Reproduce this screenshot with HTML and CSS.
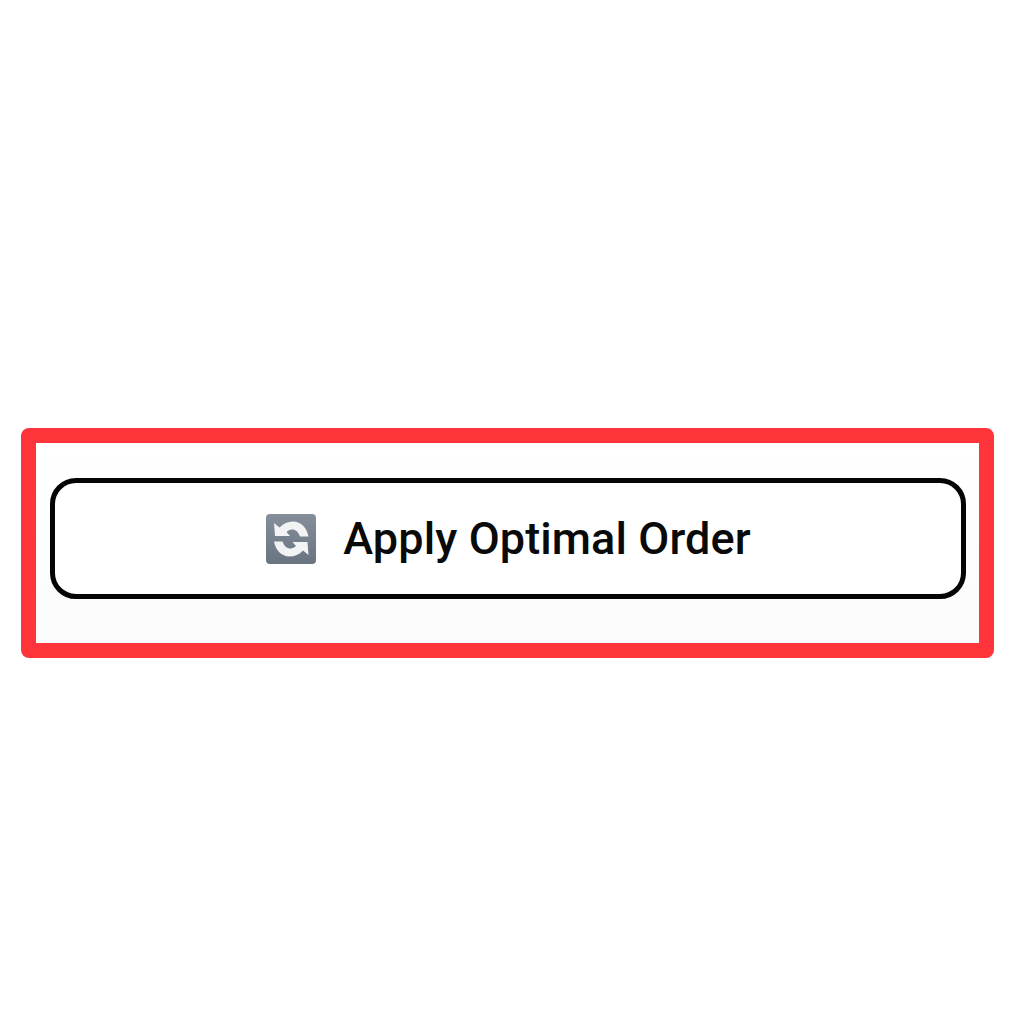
FILE: index.html
```html
<!DOCTYPE html>
<html lang="en">
<head>
    <meta charset="UTF-8" />
    <meta name="viewport" content="width=device-width, initial-scale=1.0" />
    <title>Apply Optimal Order</title>
    <link rel="stylesheet" href="styles.css">
</head>
<body>
    <div class="highlight-frame">
        <button class="order-button" type="button">
            <svg class="order-icon" viewBox="0 0 50 50" aria-hidden="true">
                <defs>
                    <linearGradient id="iconBg" x1="0" y1="0" x2="0" y2="1">
                        <stop offset="0" stop-color="#858e9b" />
                        <stop offset="1" stop-color="#6a7380" />
                    </linearGradient>
                </defs>
                <rect width="50" height="50" rx="4" fill="url(#iconBg)" />
                <path d="M8 9 L13.500 13.500 C17 9.500 22 7.500 27 7.500 C35 7.500 41 14 42.500 22.500 L34 22.500 C32.500 18 29.500 15.500 26 15.500 C24 15.500 22 16.500 20.500 18 L24 22 L9 22 Z" fill="#f2f3f4" />
                <path d="M8 9 L13.500 13.500 C17 9.500 22 7.500 27 7.500 C35 7.500 41 14 42.500 22.500 L34 22.500 C32.500 18 29.500 15.500 26 15.500 C24 15.500 22 16.500 20.500 18 L24 22 L9 22 Z" fill="#f2f3f4" transform="rotate(180 25.250 25)" />
            </svg>
            <span class="order-label">Apply Optimal Order</span>
        </button>
    </div>
</body>
</html>
```

FILE: styles.css
```css
body {
    margin: 0;
    padding: 428px 30px 0 21px;
    background-color: #ffffff;
    font-family: 'Roboto', 'Liberation Sans', sans-serif;
}

.highlight-frame {
    box-sizing: border-box;
    height: 230px;
    padding: 35px 13px 0 14px;
    background: linear-gradient(#ffffff, #fbfbfc);
    border: 15px solid #ff353b;
    border-radius: 8px;
}

.order-button {
    box-sizing: border-box;
    display: flex;
    align-items: center;
    justify-content: center;
    gap: 27px;
    width: 100%;
    height: 121px;
    padding: 0 0 0 1px;
    background-color: #ffffff;
    border: 5px solid #050505;
    border-radius: 26px;
    font-family: inherit;
    color: #0a0a0a;
}

.order-icon {
    width: 50px;
    height: 50px;
}

.order-label {
    font-size: 45px;
    font-weight: 500;
    letter-spacing: 0.1px;
}
```
